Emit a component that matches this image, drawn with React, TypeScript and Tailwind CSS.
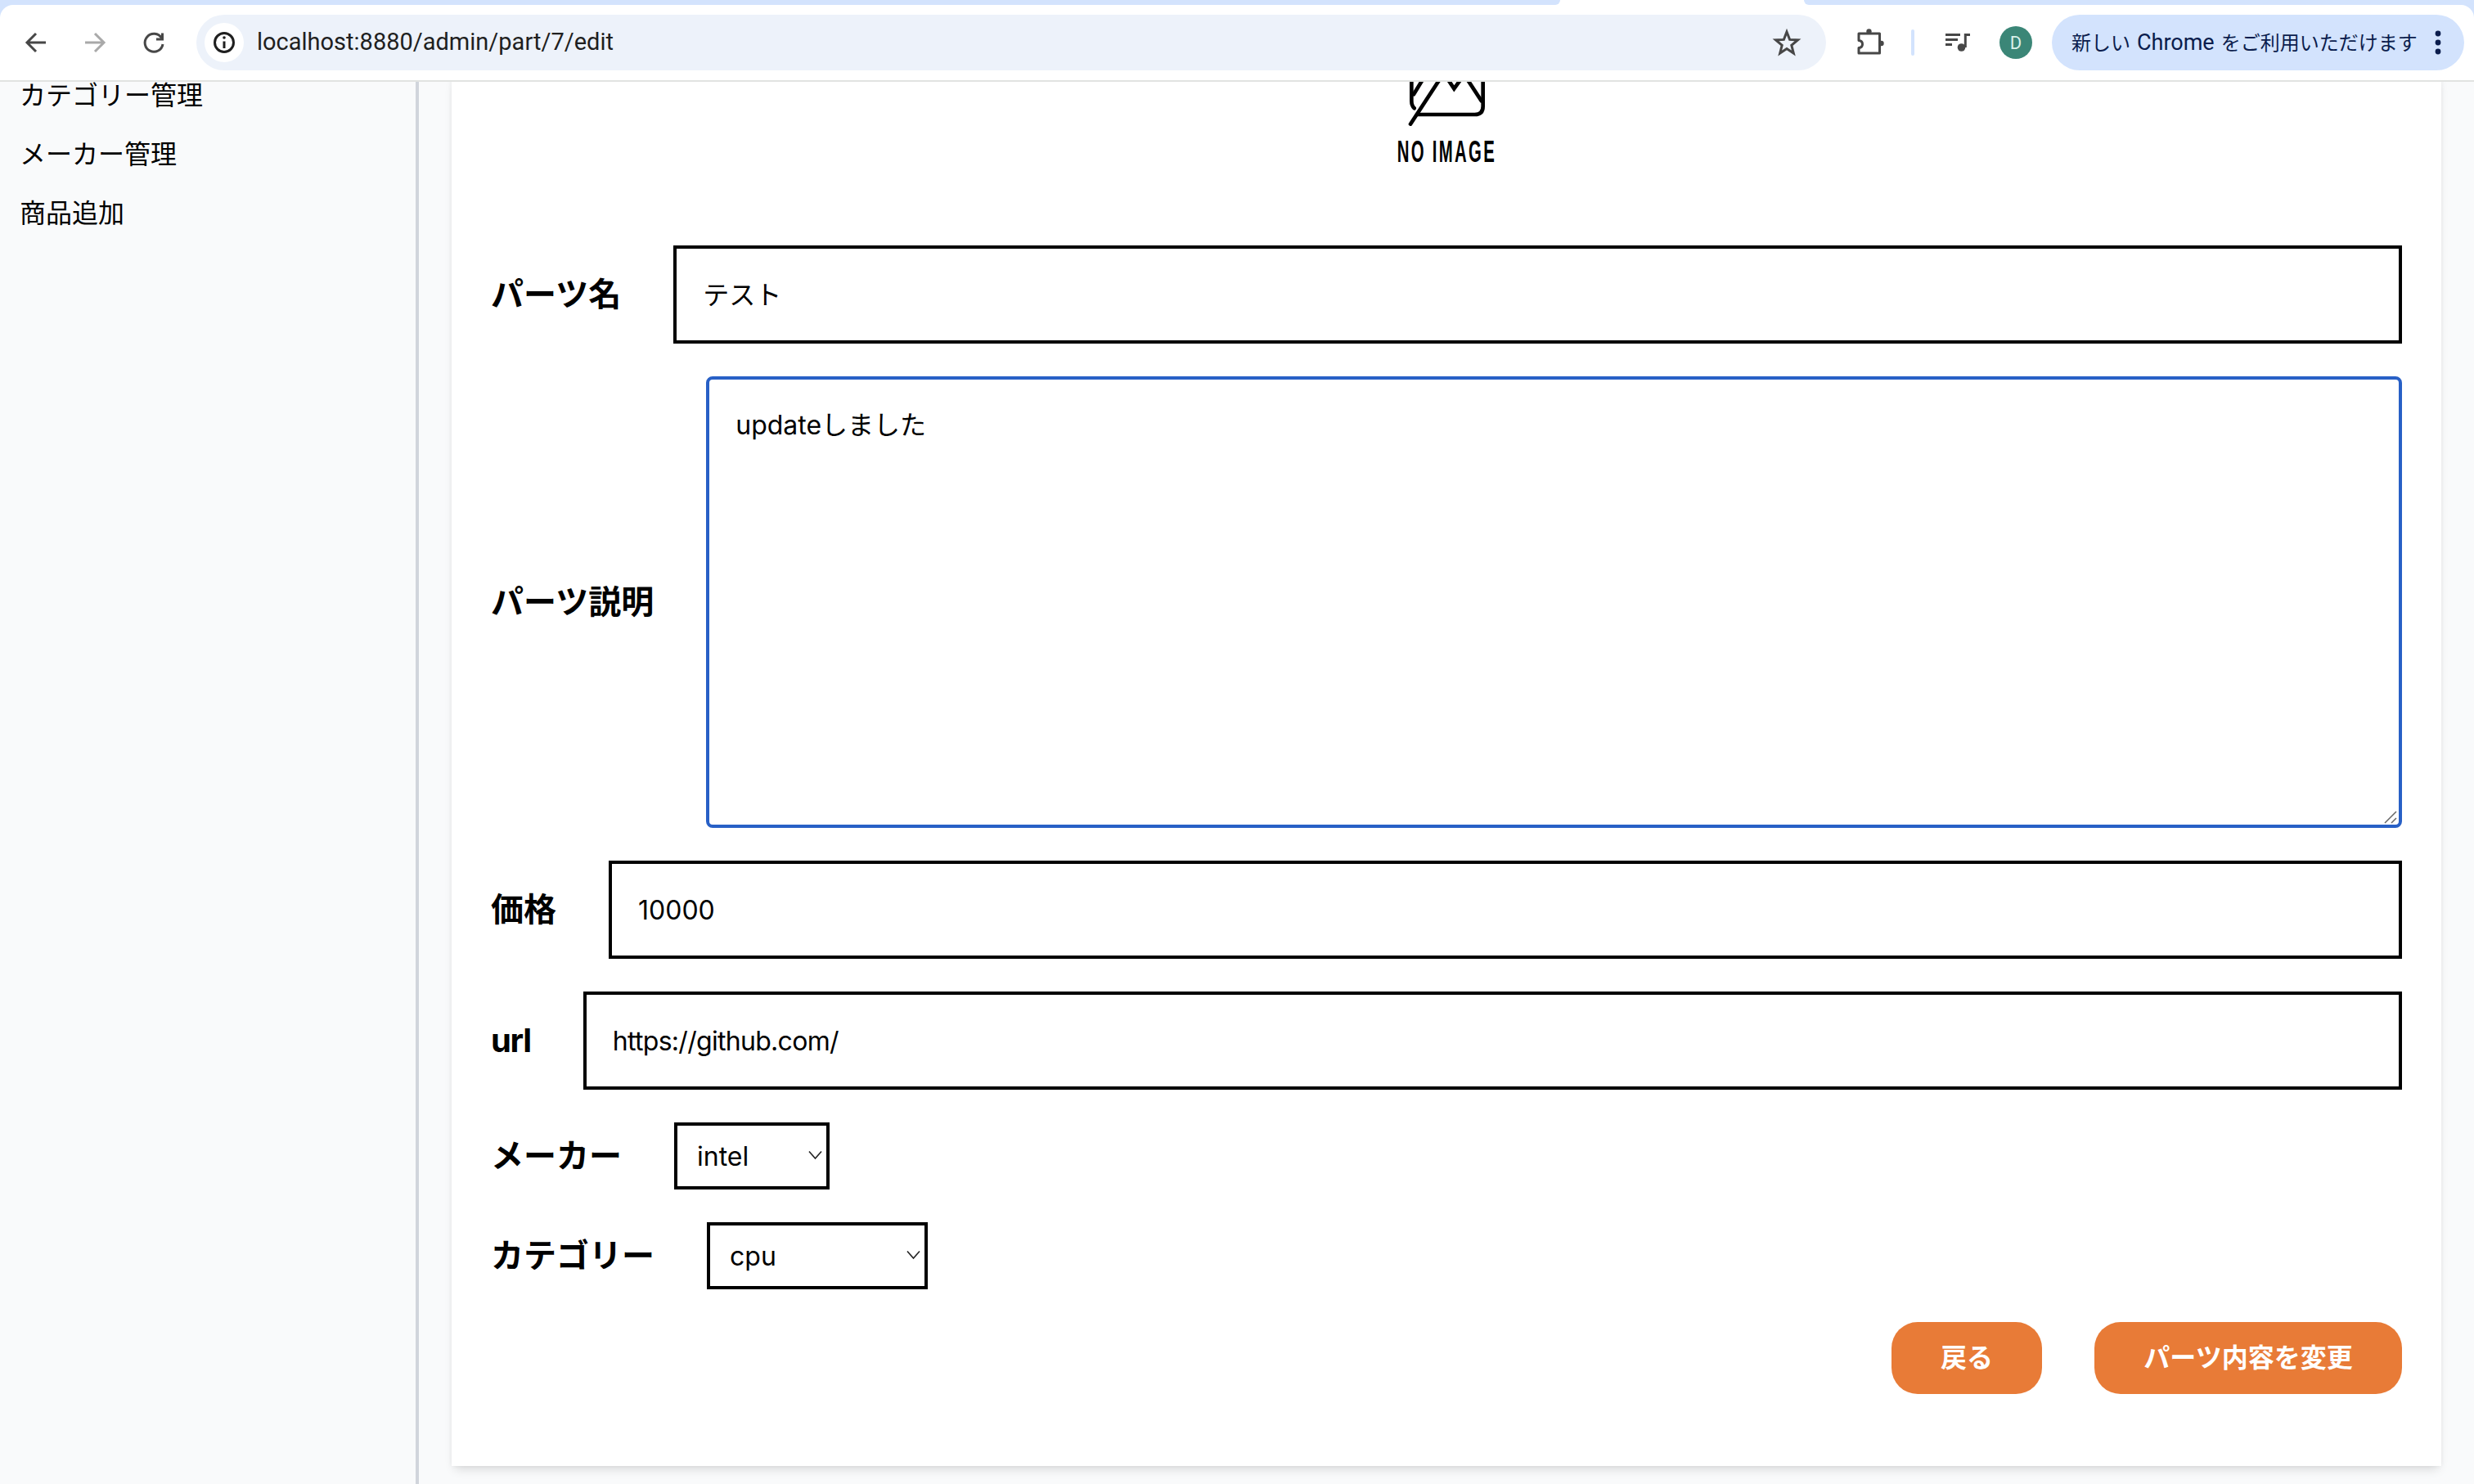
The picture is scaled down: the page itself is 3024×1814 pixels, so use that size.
import React from "react";

const FONT = "font-['Inter','Noto_Sans_CJK_JP',sans-serif]";

function Back() {
  return (
    <svg width="40" height="40" viewBox="0 0 40 40" fill="none" stroke="#474747" strokeWidth="3">
      <path d="M9 20H32M20 9L9 20L20 31" />
    </svg>
  );
}
function Forward() {
  return (
    <svg width="40" height="40" viewBox="0 0 40 40" fill="none" stroke="#a9a9a9" strokeWidth="3">
      <path d="M8 20H31M20 9L31 20L20 31" />
    </svg>
  );
}
function Reload() {
  return (
    <svg width="40" height="40" viewBox="0 0 40 40" fill="none" stroke="#474747" strokeWidth="3">
      <path d="M29.5 14.5A11 11 0 1 0 31 22" />
      <path d="M30.5 8.5V16H23" />
    </svg>
  );
}
function Info() {
  return (
    <svg width="48" height="48" viewBox="0 0 48 48" fill="none" stroke="#1f1f1f" strokeWidth="3">
      <circle cx="24" cy="24" r="11.5" />
      <path d="M24 22.5V31" />
      <circle cx="24" cy="18" r="1.8" fill="#1f1f1f" stroke="none" />
    </svg>
  );
}
function Star() {
  return (
    <svg width="36" height="36" viewBox="0 0 36 36" fill="none" stroke="#474747" strokeWidth="3" strokeLinejoin="miter">
      <path d="M18 5L21.6 14.4L31.5 14.9L23.8 21.3L26.3 31L18 25.5L9.7 31L12.2 21.3L4.5 14.9L14.4 14.4Z" />
    </svg>
  );
}
function Ext() {
  return (
    <svg width="40" height="40" viewBox="0 0 40 40" fill="none" stroke="#474747" strokeWidth="3" strokeLinejoin="round">
      <path d="M6 9H31.5V33H6V26.5C12 26 12 18 6 17.5Z" />
      <circle cx="18.5" cy="6.5" r="3.2" fill="#474747" stroke="none" />
      <circle cx="33.5" cy="21" r="3.2" fill="#474747" stroke="none" />
    </svg>
  );
}
function Music() {
  return (
    <svg width="40" height="40" viewBox="0 0 40 40" fill="none" stroke="#474747" strokeWidth="3">
      <path d="M5 10.5H23M5 16.5H20M5 22.5H13M29.3 26V10.5H35" />
      <circle cx="24.5" cy="26" r="4.8" fill="#474747" stroke="none" />
    </svg>
  );
}
function Dots() {
  return (
    <svg width="8" height="32" viewBox="0 0 8 32" fill="#0b1d4d">
      <circle cx="4" cy="5" r="3.4" />
      <circle cx="4" cy="16" r="3.4" />
      <circle cx="4" cy="27" r="3.4" />
    </svg>
  );
}
function NoImage() {
  return (
    <svg width="240" height="70" viewBox="-6 0 720 210" fill="none" stroke="#000" strokeWidth="14" strokeLinecap="round">
      <path d="M226 20V100Q226 118 236 127" />
      <path d="M268 20L234 76" />
      <path d="M330 20L222 185" />
      <path d="M360 22L382 55L406 22" />
      <path d="M430 20L482 100" />
      <path d="M488 20V120Q488 150 458 150H246" />
    </svg>
  );
}

function Chevron() {
  return (
    <svg width="18" height="12" viewBox="0 0 18 12" fill="none" stroke="#222" strokeWidth="1.6">
      <path d="M1 1.5L8.5 10L16 1.5" />
    </svg>
  );
}

function Resizer() {
  return (
    <svg width="16" height="16" viewBox="0 0 16 16" fill="none" stroke="#666" strokeWidth="1.5">
      <path d="M1 15L15 1M9 15L15 9" />
    </svg>
  );
}

function Field({
  label,
  value,
  labelClass = "",
  inputClass = "",
}: {
  label: string;
  value: string;
  labelClass?: string;
  inputClass?: string;
}) {
  return (
    <div className="flex items-center gap-[64px]">
      <label className={`text-[40px] font-bold leading-[60px] whitespace-nowrap ${labelClass}`}>{label}</label>
      <input
        defaultValue={value}
        className={`flex-1 h-[120px] border-[4px] border-black px-[32px] text-[32px] bg-white text-black outline-none ${inputClass}`}
      />
    </div>
  );
}

function SelectField({ label, value, width }: { label: string; value: string; width: string }) {
  return (
    <div className="flex items-center gap-[64px]">
      <label className="text-[40px] font-bold leading-[60px] whitespace-nowrap">{label}</label>
      <div className={`relative h-[82px] ${width}`}>
        <select
          defaultValue={value}
          className="w-full h-full appearance-none border-[4px] border-black pl-[24px] pt-[2px] text-[32px] bg-white text-black outline-none rounded-none"
        >
          <option value={value}>{value}</option>
        </select>
        <span className="absolute right-[8px] top-[34px] flex pointer-events-none">
          <Chevron />
        </span>
      </div>
    </div>
  );
}

export default function App() {
  return (
    <div className={`w-[3024px] h-[1814px] overflow-hidden flex flex-col bg-gray-50 text-black ${FONT}`}>
      <header className="shrink-0 bg-[#d3e3fd] h-[100px] flex flex-col">
        <div className="flex h-[6px] bg-white shrink-0">
          <div className="w-[1907px] bg-[#d3e3fd] rounded-br-[10px]" />
          <div className="w-[298px]" />
          <div className="flex-1 bg-[#d3e3fd] rounded-bl-[10px]" />
        </div>
        <div className="flex-1 flex items-center bg-white rounded-tl-[16px] rounded-tr-[16px] border-b-[2px] border-[#e1e3e1] pl-[24px]">
          <div className="flex items-center gap-[32px]">
            <Back />
            <Forward />
            <Reload />
          </div>
          <div className="ml-[32px] w-[1992px] h-[68px] rounded-full bg-[#edf2fa] flex items-center pl-[10px] pr-[30px]">
            <span className="w-[48px] h-[48px] rounded-full bg-white flex items-center justify-center">
              <Info />
            </span>
            <span className="ml-[16px] text-[29px] text-[#1f1f1f] font-['Roboto',sans-serif]">
              localhost:8880/admin/part/7/edit
            </span>
            <span className="ml-auto flex">
              <Star />
            </span>
          </div>
          <span className="ml-[34px] flex">
            <Ext />
          </span>
          <div className="ml-[30px] w-[4px] h-[32px] rounded-full bg-[#d3e3fd]" />
          <span className="ml-[33px] flex">
            <Music />
          </span>
          <div className="ml-[31px] w-[40px] h-[40px] rounded-full bg-[#3b8677] text-[#d8efe9] text-[22px] flex items-center justify-center font-['Roboto',sans-serif]">
            D
          </div>
          <div className="ml-[24px] w-[504px] h-[68px] rounded-full bg-[#d3e3fd] flex items-center pl-[24px] text-[#0b1d4d]">
            <span className="text-[24px] whitespace-nowrap font-['Roboto','Noto_Sans_CJK_JP',sans-serif]">
              新しい <span className="text-[27px] mx-[2px]">Chrome</span> をご利用いただけます
            </span>
            <span className="ml-auto mr-[28px] flex">
              <Dots />
            </span>
          </div>
        </div>
      </header>

      <div className="flex-1 flex min-h-0 overflow-hidden">
        <aside className="w-[512px] shrink-0 border-r-[4px] border-gray-300 bg-gray-50 pl-[24px] -mt-[19px] text-[32px] leading-[72px]">
          <div>カテゴリー管理</div>
          <div>メーカー管理</div>
          <div>商品追加</div>
        </aside>
        <main className="flex-1 px-[40px] min-w-0">
          <div className="-mt-[10px] h-[1702px] bg-white shadow-[0_8px_12px_-4px_rgba(0,0,0,0.13),0_0_6px_rgba(0,0,0,0.05)] px-[48px]">
            <div className="flex flex-col items-center h-[210px]">
              <NoImage />
              <div className="h-[52px] flex items-center justify-center text-[37px] font-bold tracking-[4.2px] font-['Liberation_Sans',sans-serif] scale-x-[0.55] whitespace-nowrap">
                NO IMAGE
              </div>
            </div>
            <div className="flex flex-col gap-[40px]">
              <Field label="パーツ名" value="テスト" inputClass="pb-[4px]" />
              <div className="flex items-center gap-[64px]">
                <label className="text-[40px] font-bold leading-[60px] whitespace-nowrap">パーツ説明</label>
                <div className="relative flex-1 flex">
                  <textarea
                    defaultValue="updateしました"
                    className="flex-1 h-[552px] resize-none border-[4px] border-[#2860c6] rounded-[8px] p-[32px] text-[32px] leading-[48px] outline-none bg-white text-black"
                  />
                  <span className="absolute right-[6px] bottom-[5px] flex pointer-events-none">
                    <Resizer />
                  </span>
                </div>
              </div>
              <Field label="価格" value="10000" />
              <Field label="url" value="https://github.com/" labelClass="tracking-[-1.3px]" inputClass="tracking-[-0.7px]" />
              <SelectField label="メーカー" value="intel" width="w-[190px]" />
              <SelectField label="カテゴリー" value="cpu" width="w-[270px]" />
              <div className="flex justify-end gap-[64px]">
                <button className="h-[88px] w-[184px] rounded-[32px] bg-[#e87b37] text-white text-[32px] font-bold">
                  戻る
                </button>
                <button className="h-[88px] w-[376px] rounded-[32px] bg-[#e87b37] text-white text-[32px] font-bold">
                  パーツ内容を変更
                </button>
              </div>
            </div>
          </div>
        </main>
      </div>
    </div>
  );
}
